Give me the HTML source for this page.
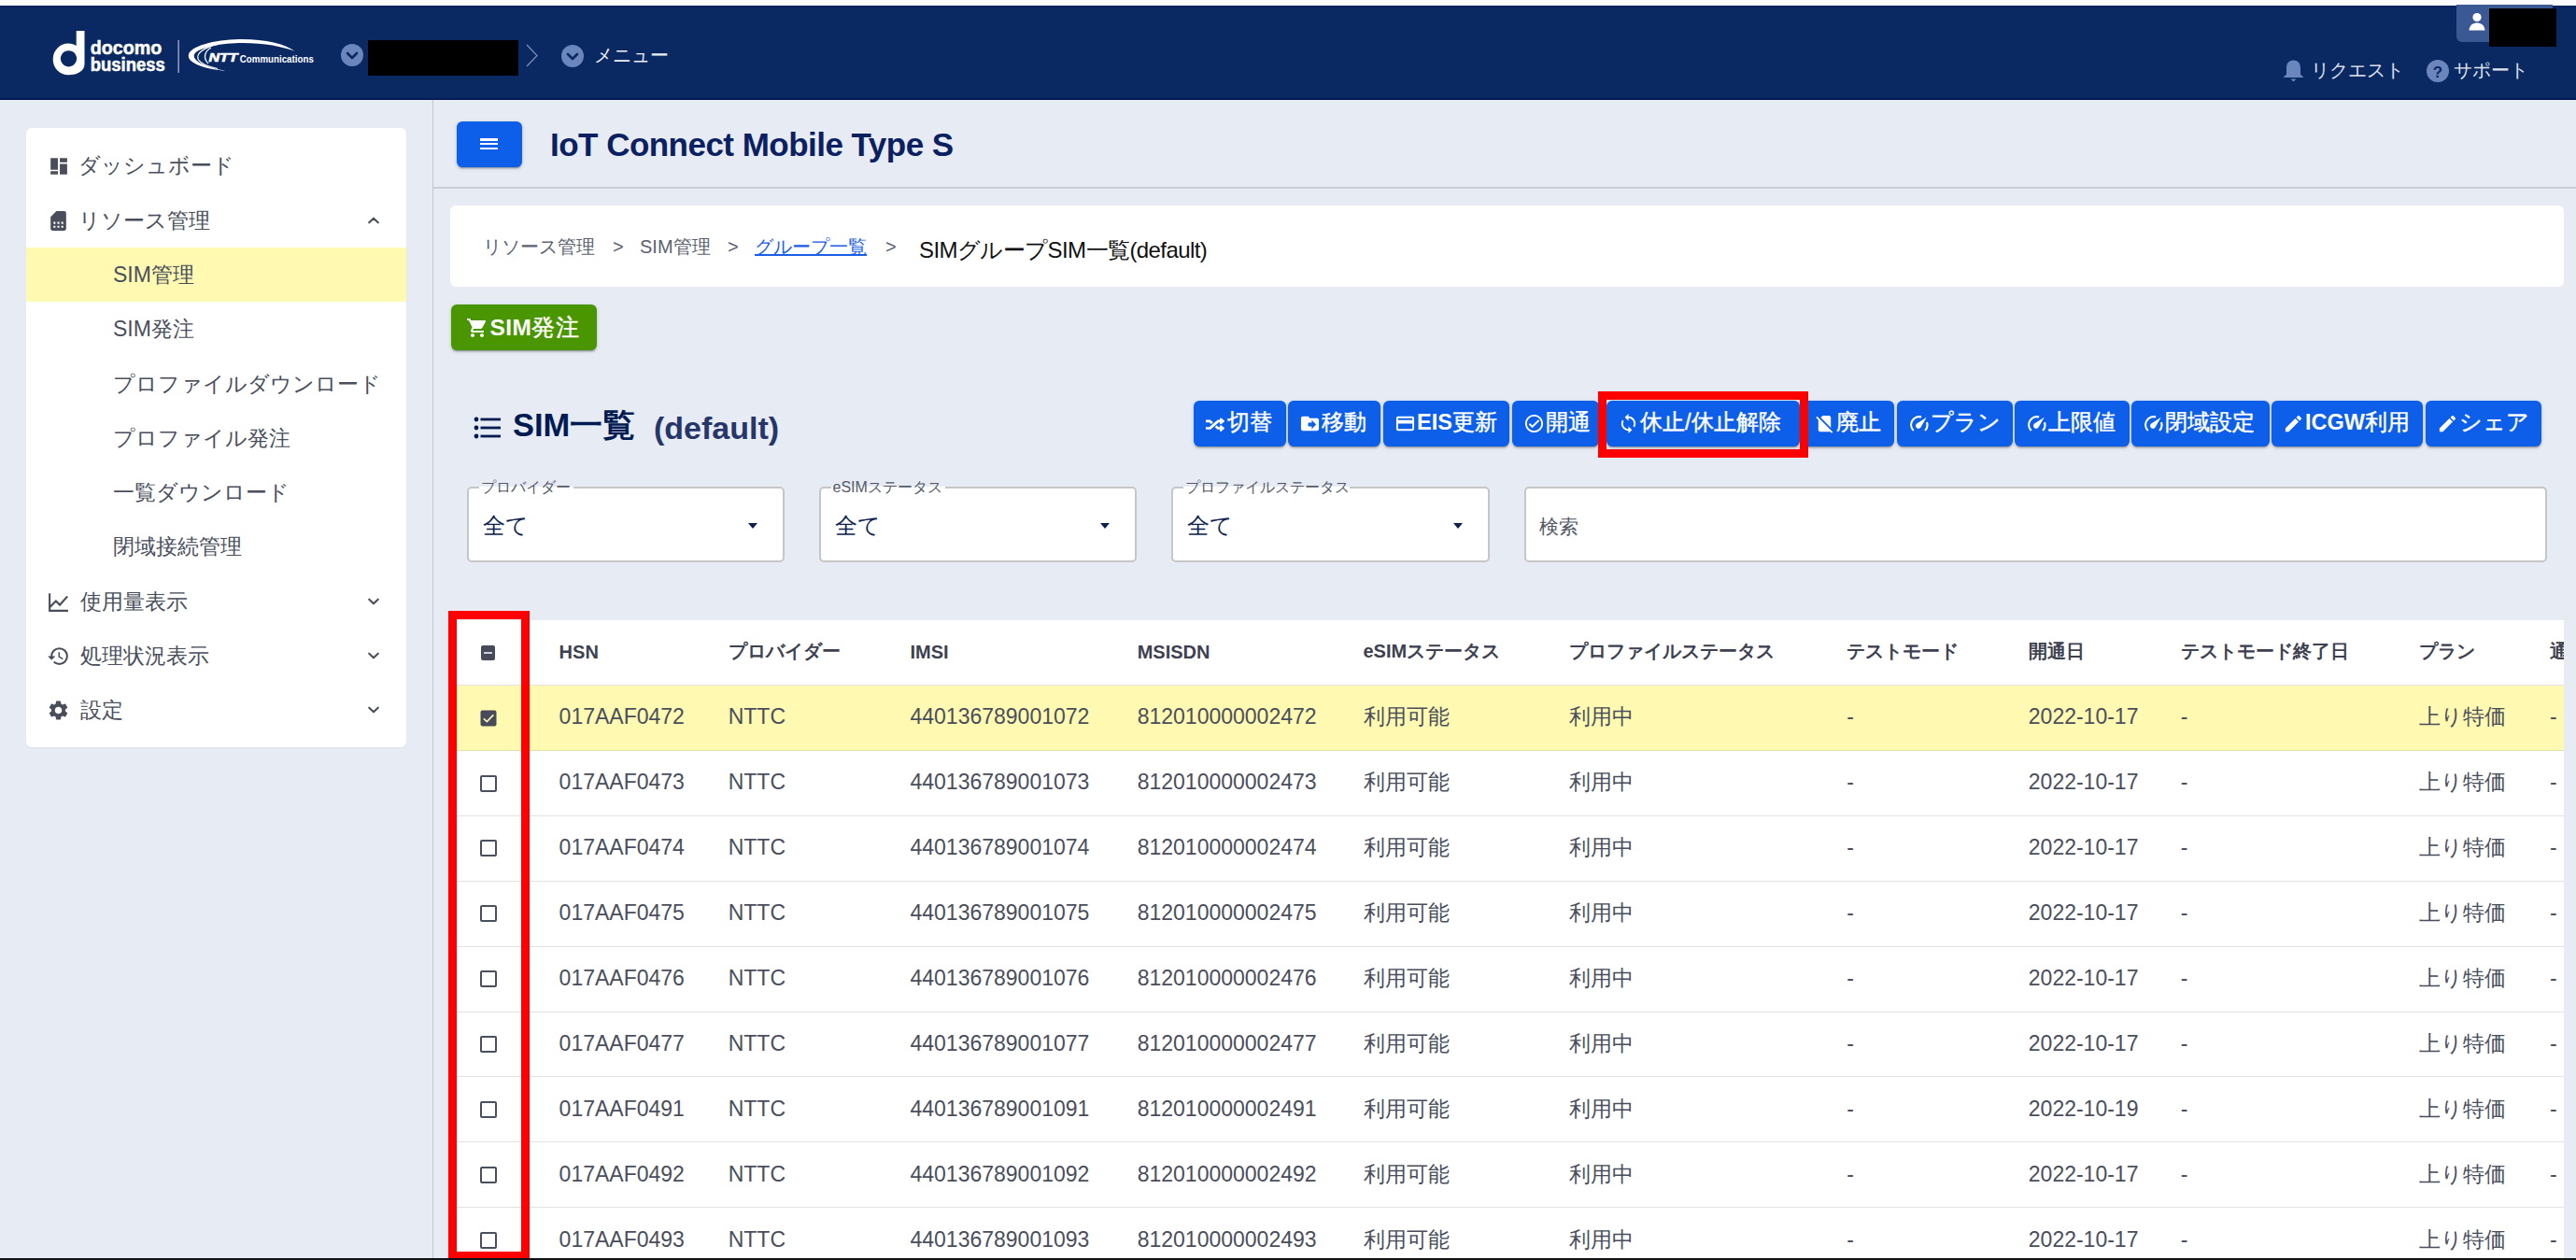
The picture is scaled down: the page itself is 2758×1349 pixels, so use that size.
<!DOCTYPE html>
<html lang="ja">
<head>
<meta charset="utf-8">
<style>
*{box-sizing:border-box;margin:0;padding:0}
html,body{width:2758px;height:1349px;overflow:hidden}
body{position:relative;background:#e7ebf4;font-family:"Liberation Sans",sans-serif;color:#4a4e5c}
.a{position:absolute;white-space:nowrap}
#topstrip{left:0;top:0;width:2758px;height:5.5px;background:#fbfbfd}
#header{left:0;top:5.5px;width:2758px;height:101.5px;background:#0a2862;box-shadow:inset 0 -1.6px 0 #001452, inset 0 1.5px 0 #001e5c}
#vdiv{left:463px;top:107px;width:1px;height:1240px;background:#c3c7d1}
#hdiv{left:464px;top:200px;width:2294px;height:2px;background:#c9ced8}
#sidebar{left:28px;top:137px;width:407px;height:663px;background:#fff;border-radius:6px;box-shadow:0 1px 2px rgba(0,0,0,.04)}
#bccard{left:482px;top:220px;width:2263px;height:87px;background:#fff;border-radius:6px}
#bottombar{left:0;top:1347px;width:2758px;height:2px;background:#111}
.redbox{position:absolute;border:9px solid #ff0000}
.t{position:absolute;white-space:nowrap;line-height:1}
.side{font-size:23px;color:#4b4f5d}
.yel{background:#fff9b1}
.tr.yel{border-bottom-color:#e6e1a8}
.btn{position:absolute;top:429px;height:49px;background:#0d5ee8;border-radius:6px;box-shadow:0 3px 1px -2px rgba(0,0,0,.2),0 2px 2px 0 rgba(0,0,0,.14),0 1px 5px 0 rgba(0,0,0,.12);color:#fff}
.btn .t{font-size:23.5px;color:#fff;top:12px;-webkit-text-stroke:0.45px #fff}
.btn svg{position:absolute}
.fld{position:absolute;top:521px;height:81px;background:#fff;border:2px solid #c6c6c6;border-radius:5px}
.fld .lbl{position:absolute;top:-9px;font-size:16px;line-height:16px;color:#555a68;white-space:nowrap}
.fld .gap{position:absolute;top:-2px;height:2px;background:#fff}
.fld .val{position:absolute;left:15px;top:28px;font-size:24px;line-height:24px;color:#0e1f4f;white-space:nowrap}
.fld .arr{position:absolute;top:37px;width:0;height:0;border-left:5.5px solid transparent;border-right:5.5px solid transparent;border-top:6.5px solid #0e1f4f}
#table{left:483px;top:663.5px;width:2262px;height:684px;background:#fff;overflow:hidden}
.tr{position:absolute;left:0;width:2262px;height:70px;border-bottom:1.5px solid #e2e2e2}
.th{font-size:20px;font-weight:bold;color:#3d4150}
.td{font-size:23px;color:#4a4e5c}
</style>
</head>
<body>
<div id="topstrip" class="a"></div>
<div id="header" class="a"></div>
<svg class="a" style="left:50px;top:28px" width="300" height="60" viewBox="50 28 300 60">
<path fill="#fff" fill-rule="evenodd" d="M81.7 33h8.8v36c0 6.5-7.5 11.3-17 11.3c-9.5 0-16.8-7-16.8-16.8c0-9.6 7.4-17 16.6-17c3.2 0 6.2 .9 8.4 2.4zM73.5 54.2a8.6 8.6 0 1 0 0.01 0z"/>
<text x="96.8" y="58.2" fill="#fff" font-family="Liberation Sans" font-weight="bold" font-size="20" stroke="#fff" stroke-width="0.5" textLength="76.5" lengthAdjust="spacingAndGlyphs">docomo</text>
<text x="96.8" y="75.8" fill="#fff" font-family="Liberation Sans" font-weight="bold" font-size="20" stroke="#fff" stroke-width="0.5" textLength="80" lengthAdjust="spacingAndGlyphs">business</text>
<rect x="190.5" y="43" width="1.3" height="35" fill="#a9b4cc"/>
<path fill="#fff" d="M241.5 75.8 C 222 74.5 201.3 68.5 201.8 59.5 C 202.5 49 232 42 259 42 C 285 42 305 47 315.5 54.8 C 303 50 283 46 260 46 C 236 46 209.5 51.5 207.8 59 C 206.5 66 222 72.5 241.5 75.8 Z"/>
<g fill="none" stroke="#fff">
<path d="M233 47.3 C 216 51.5 209.5 58 212.5 64 C 215 68.5 224 71.5 233 73.5" stroke-width="1.2"/>
<path d="M226 51 C 219 55 217 62 223 68" stroke-width="1.3"/>
</g>
<text x="223.5" y="66.3" fill="#fff" font-family="Liberation Sans" font-weight="bold" font-style="italic" font-size="12" stroke="#fff" stroke-width="0.6" textLength="31" lengthAdjust="spacingAndGlyphs">NTT</text>
<text x="256.8" y="66.6" fill="#fff" font-family="Liberation Sans" font-weight="bold" font-size="11.4" textLength="79" lengthAdjust="spacingAndGlyphs">Communications</text>
</svg>
<svg class="a" style="left:364px;top:45.5px" width="26" height="26" viewBox="0 0 26 26"><circle cx="13" cy="13" r="12" fill="#6a86bd"/><path d="M8 11 L13 16 L18 11" fill="none" stroke="#0a2862" stroke-width="2.6" stroke-linecap="round" stroke-linejoin="round"/></svg>
<div class="a" style="left:394px;top:43px;width:161px;height:38px;background:#000"></div>
<svg class="a" style="left:560px;top:46px" width="20" height="28" viewBox="0 0 20 28"><path d="M4 2 L15 13.5 L4 25" fill="none" stroke="#7c8db5" stroke-width="1.3"/></svg>
<svg class="a" style="left:599.5px;top:46.5px" width="26" height="26" viewBox="0 0 26 26"><circle cx="13" cy="13" r="12" fill="#6a86bd"/><path d="M8 11 L13 16 L18 11" fill="none" stroke="#0a2862" stroke-width="2.6" stroke-linecap="round" stroke-linejoin="round"/></svg>
<div class="t " style="left:636px;top:49px;font-size:20px;color:#eceef4">メニュー</div>
<div class="a" style="left:2630px;top:5px;width:103px;height:40px;background:#3a5894;border-radius:0 0 6px 6px"></div>
<svg class="a" style="left:2641px;top:13px" width="22" height="21" viewBox="0 0 22 21"><circle cx="11" cy="5.5" r="4.6" fill="#fff"/><path d="M2.5 19.5 C3 13.5 7 11.5 11 11.5 C15 11.5 19 13.5 19.5 19.5 Z" fill="#fff"/></svg>
<div class="a" style="left:2665px;top:9px;width:72px;height:41px;background:#000"></div>
<svg class="a" style="left:2443px;top:63px" width="25" height="26" viewBox="0 0 25 26"><path d="M12.5 1.5 C7.5 1.5 5 5 5 10 L5 16.5 L1.5 20 L23.5 20 L20 16.5 L20 10 C20 5 17.5 1.5 12.5 1.5Z" fill="#6a86bd"/><path d="M9.5 21.5 L15.5 21.5 L12.5 24.5Z" fill="#6a86bd"/></svg>
<div class="t " style="left:2474px;top:65px;font-size:20px;color:#dfe2ea">リクエスト</div>
<svg class="a" style="left:2597px;top:63px" width="26" height="26" viewBox="0 0 26 26"><circle cx="13" cy="13" r="12" fill="#6a86bd"/><text x="13" y="19.5" text-anchor="middle" font-family="Liberation Sans" font-weight="bold" font-size="17" fill="#0a2862">?</text></svg>
<div class="t " style="left:2627px;top:65px;font-size:20px;color:#dfe2ea">サポート</div>
<div id="vdiv" class="a"></div>
<div id="hdiv" class="a"></div>
<div id="sidebar" class="a"></div>
<div class="a yel" style="left:28px;top:265px;width:407px;height:58px"></div>
<div class="t side" style="left:83.5px;top:166.4px;">ダッシュボード</div>
<svg class="a" style="left:50px;top:165.5px" width="25" height="25" viewBox="0 0 24 24" fill="#4a4d5a"><path d="M4 3h7.5v12H4zM4 16.5h7.5v3.5H4zM13.5 3H21v4.5h-7.5zM13.5 9H21v11h-7.5z"/></svg>
<div class="t side" style="left:83.5px;top:224.5px;">リソース管理</div>
<svg class="a" style="left:50px;top:223.60000000000002px" width="25" height="25" viewBox="0 0 24 24" fill="#4a4d5a"><path d="M18 2h-8L4 8v12c0 1.1.9 2 2 2h12c1.1 0 2-.9 2-2V4c0-1.1-.9-2-2-2zM9 19H7v-2h2v2zm8 0h-2v-2h2v2zm-4 0h-2v-2h2v2zm0-4h-2v-2h2v2zm-4 0H7v-2h2v2zm8 0h-2v-2h2v2z"/></svg>
<svg class="a" style="left:392px;top:228.3px" width="16" height="16" viewBox="0 0 16 16"><path d="M3.2 10.3 L8 5.7 L12.8 10.3" fill="none" stroke="#4a4d5a" stroke-width="2.1" stroke-linecap="round" stroke-linejoin="round"/></svg>
<div class="t side" style="left:121px;top:283.2px;">SIM管理</div>
<div class="t side" style="left:121px;top:341.2px;">SIM発注</div>
<div class="t side" style="left:121px;top:399.5px;">プロファイルダウンロード</div>
<div class="t side" style="left:121px;top:457.7px;">プロファイル発注</div>
<div class="t side" style="left:121px;top:516.2px;">一覧ダウンロード</div>
<div class="t side" style="left:121px;top:574.2px;">閉域接続管理</div>
<div class="t side" style="left:86px;top:632.5px;">使用量表示</div>
<svg class="a" style="left:50px;top:631.5999999999999px" width="25" height="25" viewBox="0 0 24 24" fill="#4a4d5a"><path d="M3.5 18.49l6-6.01 4 4L22 6.92l-1.41-1.41-7.09 7.97-4-4L2 16.99z"/><path d="M2 3h2v17h18v2H2z"/></svg>
<svg class="a" style="left:392px;top:635.5999999999999px" width="16" height="16" viewBox="0 0 16 16"><path d="M3.2 5.7 L8 10.3 L12.8 5.7" fill="none" stroke="#4a4d5a" stroke-width="2.1" stroke-linecap="round" stroke-linejoin="round"/></svg>
<div class="t side" style="left:86px;top:690.7px;">処理状況表示</div>
<svg class="a" style="left:50px;top:689.8px" width="25" height="25" viewBox="0 0 24 24" fill="#4a4d5a"><path d="M13 3a9 9 0 0 0-9 9H1l3.89 3.89.07.14L9 12H6c0-3.87 3.13-7 7-7s7 3.13 7 7-3.13 7-7 7c-1.93 0-3.68-.79-4.94-2.06l-1.42 1.42A8.954 8.954 0 0 0 13 21a9 9 0 0 0 0-18zm-1 5v5l4.28 2.54.72-1.21-3.5-2.08V8H12z"/></svg>
<svg class="a" style="left:392px;top:693.8px" width="16" height="16" viewBox="0 0 16 16"><path d="M3.2 5.7 L8 10.3 L12.8 5.7" fill="none" stroke="#4a4d5a" stroke-width="2.1" stroke-linecap="round" stroke-linejoin="round"/></svg>
<div class="t side" style="left:86px;top:749.2px;">設定</div>
<svg class="a" style="left:50px;top:748.3px" width="25" height="25" viewBox="0 0 24 24" fill="#4a4d5a"><path d="M19.14 12.94c.04-.3.06-.61.06-.94 0-.32-.02-.64-.07-.94l2.03-1.58a.49.49 0 0 0 .12-.61l-1.92-3.32a.488.488 0 0 0-.59-.22l-2.39.96c-.5-.38-1.03-.7-1.62-.94l-.36-2.54a.484.484 0 0 0-.48-.41h-3.84c-.24 0-.43.17-.47.41l-.36 2.54c-.59.24-1.13.57-1.62.94l-2.39-.96c-.22-.08-.47 0-.59.22L2.74 8.87c-.12.21-.08.47.12.61l2.03 1.58c-.05.3-.09.63-.09.94s.02.64.07.94l-2.03 1.58a.49.49 0 0 0-.12.61l1.92 3.32c.12.22.37.29.59.22l2.39-.96c.5.38 1.03.7 1.62.94l.36 2.54c.05.24.24.41.48.41h3.84c.24 0 .44-.17.47-.41l.36-2.54c.59-.24 1.13-.56 1.62-.94l2.39.96c.22.08.47 0 .59-.22l1.92-3.32c.12-.22.07-.47-.12-.61l-2.01-1.58zM12 15.6c-1.98 0-3.6-1.62-3.6-3.6s1.62-3.6 3.6-3.6 3.6 1.62 3.6 3.6-1.62 3.6-3.6 3.6z"/></svg>
<svg class="a" style="left:392px;top:752.3px" width="16" height="16" viewBox="0 0 16 16"><path d="M3.2 5.7 L8 10.3 L12.8 5.7" fill="none" stroke="#4a4d5a" stroke-width="2.1" stroke-linecap="round" stroke-linejoin="round"/></svg>
<div class="a" style="left:489px;top:130px;width:70px;height:48.5px;background:#0d5ee8;border-radius:6px;box-shadow:0 3px 1px -2px rgba(0,0,0,.2),0 2px 2px 0 rgba(0,0,0,.14),0 1px 5px 0 rgba(0,0,0,.12)"></div>
<div class="a" style="left:514px;top:148.3px;width:18.5px;height:2.4px;background:#fff"></div>
<div class="a" style="left:514px;top:153.1px;width:18.5px;height:2.4px;background:#fff"></div>
<div class="a" style="left:514px;top:157.9px;width:18.5px;height:2.4px;background:#fff"></div>
<div class="t " style="left:589px;top:137px;font-size:35px;font-weight:bold;color:#0a2060;letter-spacing:-0.52px">IoT Connect Mobile Type S</div>
<div id="bccard" class="a"></div>
<div class="t " style="left:517px;top:253.5px;font-size:20px;color:#5d6270">リソース管理</div>
<div class="t " style="left:656px;top:253.5px;font-size:20px;color:#5d6270">&gt;</div>
<div class="t " style="left:685px;top:253.5px;font-size:20px;color:#5d6270">SIM管理</div>
<div class="t " style="left:779px;top:253.5px;font-size:20px;color:#5d6270">&gt;</div>
<div class="t " style="left:808px;top:253.5px;font-size:20px;color:#1a5ee8;text-decoration:underline">グループ一覧</div>
<div class="t " style="left:948px;top:253.5px;font-size:20px;color:#5d6270">&gt;</div>
<div class="t " style="left:984px;top:256px;font-size:24px;color:#111;letter-spacing:-0.58px">SIMグループSIM一覧(default)</div>
<div class="a" style="left:483px;top:326px;width:156px;height:49px;background:#4a9600;border-radius:6px;box-shadow:0 3px 1px -2px rgba(0,0,0,.2),0 2px 2px 0 rgba(0,0,0,.14),0 1px 5px 0 rgba(0,0,0,.12)"></div>
<svg class="a" style="left:499px;top:339px" width="24" height="24" viewBox="0 0 24 24" fill="#fff"><path d="M7 18c-1.1 0-1.99.9-1.99 2S5.9 22 7 22s2-.9 2-2-.9-2-2-2zM1 2v2h2l3.6 7.59-1.35 2.45c-.16.28-.25.61-.25.96 0 1.1.9 2 2 2h12v-2H7.42c-.14 0-.25-.11-.25-.25l.03-.12.9-1.63h7.45c.75 0 1.41-.41 1.75-1.03l3.58-6.49A1.003 1.003 0 0 0 20 4H5.21l-.94-2H1zm16 16c-1.1 0-1.99.9-1.99 2s.89 2 1.99 2 2-.9 2-2-.9-2-2-2z"/></svg>
<div class="t " style="left:524.5px;top:338.5px;font-size:24.5px;color:#fff;letter-spacing:0.4px;-webkit-text-stroke:0.45px #fff"><b style="-webkit-text-stroke:0">SIM</b>発注</div>
<svg class="a" style="left:506px;top:445px" width="32" height="26" viewBox="0 0 32 26" fill="#001a52"><circle cx="4" cy="4" r="2.4"/><circle cx="4" cy="13" r="2.4"/><circle cx="4" cy="22" r="2.4"/><rect x="8.5" y="2.6" width="21.5" height="2.8"/><rect x="8.5" y="11.6" width="21.5" height="2.8"/><rect x="8.5" y="20.6" width="21.5" height="2.8"/></svg>
<div class="t " style="left:549px;top:438px;font-size:34.5px;font-weight:bold;color:#001a52;letter-spacing:0px">SIM一覧</div>
<div class="t " style="left:700px;top:441px;font-size:34px;font-weight:bold;color:#263668">(default)</div>
<div class="btn" style="left:1278px;width:98.5px"><svg style="left:12px;top:13px" width="23" height="23" viewBox="0 0 24 24" fill="#fff"><path transform="translate(1,4.7) scale(0.041,0.0335)" d="M504.971 359.029c9.373 9.373 9.373 24.569 0 33.941l-80 79.984c-15.01 15.01-40.971 4.49-40.971-16.971V416h-58.785a12.004 12.004 0 0 1-8.773-3.812l-70.556-75.596 53.333-57.143L352 336h32v-39.981c0-21.438 25.943-31.998 40.971-16.971l80 79.981zM12 176h84l52.781 56.551 53.333-57.143-70.556-75.596A11.999 11.999 0 0 0 122.785 96H12c-6.627 0-12 5.373-12 12v56c0 6.627 5.373 12 12 12zm372 0v39.984c0 21.46 25.961 31.98 40.971 16.971l80-79.984c9.373-9.373 9.373-24.569 0-33.941l-80-79.981C409.943 24.021 384 34.582 384 56.019V96h-58.785a12.004 12.004 0 0 0-8.773 3.812L96 336H12c-6.627 0-12 5.373-12 12v56c0 6.627 5.373 12 12 12h110.785c3.326 0 6.503-1.381 8.773-3.812L352 176h32z"/></svg><div class="t" style="left:36px">切替</div></div>
<div class="btn" style="left:1379px;width:99px"><svg style="left:12px;top:13px" width="23" height="23" viewBox="0 0 24 24" fill="#fff"><path d="M20 6h-8l-2-2H4c-1.1 0-1.99.9-1.99 2L2 18c0 1.1.9 2 2 2h16c1.1 0 2-.9 2-2V8c0-1.1-.9-2-2-2zm-6 12v-3h-4v-4h4V8l5 5-5 5z"/></svg><div class="t" style="left:36px">移動</div></div>
<div class="btn" style="left:1481px;width:135px"><svg style="left:12px;top:13px" width="23" height="23" viewBox="0 0 24 24" fill="#fff"><path d="M20 4H4c-1.11 0-1.99.89-1.99 2L2 18c0 1.11.89 2 2 2h16c1.11 0 2-.89 2-2V6c0-1.11-.89-2-2-2zm0 14H4v-6h16v6zm0-10H4V6h16v2z"/></svg><div class="t" style="left:36px"><b style="-webkit-text-stroke:0">EIS</b>更新</div></div>
<div class="btn" style="left:1619px;width:93px"><svg style="left:12px;top:13px" width="23" height="23" viewBox="0 0 24 24" fill="#fff"><path d="M12 2C6.48 2 2 6.48 2 12s4.48 10 10 10 10-4.48 10-10S17.52 2 12 2zm0 18c-4.41 0-8-3.59-8-8s3.59-8 8-8 8 3.59 8 8-3.59 8-8 8zm4.59-12.42L10 14.17l-2.59-2.58L6 13l4 4 8-8z"/></svg><div class="t" style="left:36px">開通</div></div>
<div class="btn" style="left:1720px;width:207px"><svg style="left:12px;top:13px" width="23" height="23" viewBox="0 0 24 24" fill="#fff"><path d="M12 4V1L8 5l4 4V6c3.31 0 6 2.69 6 6 0 1.01-.25 1.97-.7 2.8l1.46 1.46A7.93 7.93 0 0 0 20 12c0-4.42-3.58-8-8-8zm0 14c-3.31 0-6-2.69-6-6 0-1.01.25-1.97.7-2.8L5.24 7.74A7.93 7.93 0 0 0 4 12c0 4.42 3.58 8 8 8v3l4-4-4-4v3z"/></svg><div class="t" style="left:36px">休止/休止解除</div></div>
<div class="btn" style="left:1930px;width:98px"><svg style="left:12px;top:13px" width="23" height="23" viewBox="0 0 24 24" fill="#fff"><path d="M18.99 5c0-1.1-.89-2-1.99-2h-7L7.66 5.34 19 16.68 18.99 5zM3.65 3.88L2.38 5.15 5 7.77V19c0 1.1.9 2 2 2h10.01c.35 0 .67-.1.96-.26l1.88 1.88 1.27-1.27L3.65 3.88z"/></svg><div class="t" style="left:36px">廃止</div></div>
<div class="btn" style="left:2031px;width:124px"><svg style="left:12px;top:13px" width="23" height="23" viewBox="0 0 24 24" fill="#fff"><g transform="translate(-1.14,0.1) scale(1.12)"><path d="M6.4 17.7 A 8.1 8.1 0 0 1 14.2 4.1 M 19.6 9.3 A 8.1 8.1 0 0 1 17.8 17.7" fill="none" stroke="#fff" stroke-width="2"/><path d="M19.4 4.3 L 14 13.6 A 2.8 2.8 0 1 1 10.4 10.2 Z"/></g></svg><div class="t" style="left:36px">プラン</div></div>
<div class="btn" style="left:2157px;width:123px"><svg style="left:12px;top:13px" width="23" height="23" viewBox="0 0 24 24" fill="#fff"><g transform="translate(-1.14,0.1) scale(1.12)"><path d="M6.4 17.7 A 8.1 8.1 0 0 1 14.2 4.1 M 19.6 9.3 A 8.1 8.1 0 0 1 17.8 17.7" fill="none" stroke="#fff" stroke-width="2"/><path d="M19.4 4.3 L 14 13.6 A 2.8 2.8 0 1 1 10.4 10.2 Z"/></g></svg><div class="t" style="left:36px">上限値</div></div>
<div class="btn" style="left:2282px;width:148px"><svg style="left:12px;top:13px" width="23" height="23" viewBox="0 0 24 24" fill="#fff"><g transform="translate(-1.14,0.1) scale(1.12)"><path d="M6.4 17.7 A 8.1 8.1 0 0 1 14.2 4.1 M 19.6 9.3 A 8.1 8.1 0 0 1 17.8 17.7" fill="none" stroke="#fff" stroke-width="2"/><path d="M19.4 4.3 L 14 13.6 A 2.8 2.8 0 1 1 10.4 10.2 Z"/></g></svg><div class="t" style="left:36px">閉域設定</div></div>
<div class="btn" style="left:2432px;width:162px"><svg style="left:12px;top:13px" width="23" height="23" viewBox="0 0 24 24" fill="#fff"><path d="M3 17.25V21h3.75L17.81 9.94l-3.75-3.75L3 17.25zM20.71 7.04a.996.996 0 0 0 0-1.41l-2.34-2.34a.996.996 0 0 0-1.41 0l-1.83 1.83 3.75 3.75 1.83-1.83z"/></svg><div class="t" style="left:36px"><b style="-webkit-text-stroke:0">ICGW</b>利用</div></div>
<div class="btn" style="left:2597px;width:124px"><svg style="left:12px;top:13px" width="23" height="23" viewBox="0 0 24 24" fill="#fff"><path d="M3 17.25V21h3.75L17.81 9.94l-3.75-3.75L3 17.25zM20.71 7.04a.996.996 0 0 0 0-1.41l-2.34-2.34a.996.996 0 0 0-1.41 0l-1.83 1.83 3.75 3.75 1.83-1.83z"/></svg><div class="t" style="left:36px">シェア</div></div>
<div class="fld" style="left:500px;width:340px"><div class="gap" style="left:11.4px;width:101px"></div><div class="lbl" style="left:12.5px">プロバイダー</div><div class="val">全て</div><div class="arr" style="left:299px"></div></div>
<div class="fld" style="left:877px;width:340px"><div class="gap" style="left:11.4px;width:122px"></div><div class="lbl" style="left:12.5px">eSIMステータス</div><div class="val">全て</div><div class="arr" style="left:299px"></div></div>
<div class="fld" style="left:1254px;width:341px"><div class="gap" style="left:11.4px;width:178px"></div><div class="lbl" style="left:12.5px">プロファイルステータス</div><div class="val">全て</div><div class="arr" style="left:300px"></div></div>
<div class="fld" style="left:1632px;width:1095px"><div class="val" style="font-size:21px;color:#555a66;top:28.5px;left:14px">検索</div></div>
<div id="table" class="a"><div class="tr" style="top:0;height:70.2px"></div><div class="t th" style="left:115.6px;top:24.5px;">HSN</div><div class="t th" style="left:296.7px;top:23px;">プロバイダー</div><div class="t th" style="left:491.5px;top:24.5px;">IMSI</div><div class="t th" style="left:734.7px;top:24.5px;">MSISDN</div><div class="t th" style="left:976.5px;top:23px;">eSIMステータス</div><div class="t th" style="left:1197.3px;top:23px;">プロファイルステータス</div><div class="t th" style="left:1494.3px;top:23px;">テストモード</div><div class="t th" style="left:1688.8px;top:23px;">開通日</div><div class="t th" style="left:1851.8px;top:23px;">テストモード終了日</div><div class="t th" style="left:2107px;top:23px;">プラン</div><div class="t th" style="left:2247px;top:23px;">通</div><div class="a" style="left:31.5px;top:27.5px;width:15.5px;height:15.5px;background:#474b59;border-radius:2px"><div class="a" style="left:3px;top:6.6px;width:9.5px;height:2.2px;background:#cfd1d8"></div></div><div class="tr yel" style="top:70.2px"></div><div class="t td" style="left:115.6px;top:92.5px;">017AAF0472</div><div class="t td" style="left:296.7px;top:92.5px;">NTTC</div><div class="t td" style="left:491.5px;top:92.5px;">440136789001072</div><div class="t td" style="left:734.7px;top:92.5px;">812010000002472</div><div class="t td" style="left:976.5px;top:92.5px;">利用可能</div><div class="t td" style="left:1197.3px;top:92.5px;">利用中</div><div class="t td" style="left:1494.3px;top:92.5px;">-</div><div class="t td" style="left:1688.8px;top:92.5px;">2022-10-17</div><div class="t td" style="left:1851.8px;top:92.5px;">-</div><div class="t td" style="left:2107px;top:92.5px;">上り特価</div><div class="t td" style="left:2247px;top:92.5px;">-</div><svg class="a" style="left:30.5px;top:96.0px" width="18" height="18" viewBox="0 0 18 18"><rect x="0.5" y="0.5" width="17" height="17" rx="2" fill="#474b59"/><path d="M3.8 9.4 L7.3 12.6 L14.3 5.4" fill="none" stroke="#fbf6c0" stroke-width="1.7"/></svg><div class="tr" style="top:140.2px"></div><div class="t td" style="left:115.6px;top:162.5px;">017AAF0473</div><div class="t td" style="left:296.7px;top:162.5px;">NTTC</div><div class="t td" style="left:491.5px;top:162.5px;">440136789001073</div><div class="t td" style="left:734.7px;top:162.5px;">812010000002473</div><div class="t td" style="left:976.5px;top:162.5px;">利用可能</div><div class="t td" style="left:1197.3px;top:162.5px;">利用中</div><div class="t td" style="left:1494.3px;top:162.5px;">-</div><div class="t td" style="left:1688.8px;top:162.5px;">2022-10-17</div><div class="t td" style="left:1851.8px;top:162.5px;">-</div><div class="t td" style="left:2107px;top:162.5px;">上り特価</div><div class="t td" style="left:2247px;top:162.5px;">-</div><div class="a" style="left:30.5px;top:166.0px;width:18px;height:18px;border:2.2px solid #4a4f5e;border-radius:2px"></div><div class="tr" style="top:210.1px"></div><div class="t td" style="left:115.6px;top:232.4px;">017AAF0474</div><div class="t td" style="left:296.7px;top:232.4px;">NTTC</div><div class="t td" style="left:491.5px;top:232.4px;">440136789001074</div><div class="t td" style="left:734.7px;top:232.4px;">812010000002474</div><div class="t td" style="left:976.5px;top:232.4px;">利用可能</div><div class="t td" style="left:1197.3px;top:232.4px;">利用中</div><div class="t td" style="left:1494.3px;top:232.4px;">-</div><div class="t td" style="left:1688.8px;top:232.4px;">2022-10-17</div><div class="t td" style="left:1851.8px;top:232.4px;">-</div><div class="t td" style="left:2107px;top:232.4px;">上り特価</div><div class="t td" style="left:2247px;top:232.4px;">-</div><div class="a" style="left:30.5px;top:235.9px;width:18px;height:18px;border:2.2px solid #4a4f5e;border-radius:2px"></div><div class="tr" style="top:280.1px"></div><div class="t td" style="left:115.6px;top:302.4px;">017AAF0475</div><div class="t td" style="left:296.7px;top:302.4px;">NTTC</div><div class="t td" style="left:491.5px;top:302.4px;">440136789001075</div><div class="t td" style="left:734.7px;top:302.4px;">812010000002475</div><div class="t td" style="left:976.5px;top:302.4px;">利用可能</div><div class="t td" style="left:1197.3px;top:302.4px;">利用中</div><div class="t td" style="left:1494.3px;top:302.4px;">-</div><div class="t td" style="left:1688.8px;top:302.4px;">2022-10-17</div><div class="t td" style="left:1851.8px;top:302.4px;">-</div><div class="t td" style="left:2107px;top:302.4px;">上り特価</div><div class="t td" style="left:2247px;top:302.4px;">-</div><div class="a" style="left:30.5px;top:305.9px;width:18px;height:18px;border:2.2px solid #4a4f5e;border-radius:2px"></div><div class="tr" style="top:350.0px"></div><div class="t td" style="left:115.6px;top:372.3px;">017AAF0476</div><div class="t td" style="left:296.7px;top:372.3px;">NTTC</div><div class="t td" style="left:491.5px;top:372.3px;">440136789001076</div><div class="t td" style="left:734.7px;top:372.3px;">812010000002476</div><div class="t td" style="left:976.5px;top:372.3px;">利用可能</div><div class="t td" style="left:1197.3px;top:372.3px;">利用中</div><div class="t td" style="left:1494.3px;top:372.3px;">-</div><div class="t td" style="left:1688.8px;top:372.3px;">2022-10-17</div><div class="t td" style="left:1851.8px;top:372.3px;">-</div><div class="t td" style="left:2107px;top:372.3px;">上り特価</div><div class="t td" style="left:2247px;top:372.3px;">-</div><div class="a" style="left:30.5px;top:375.8px;width:18px;height:18px;border:2.2px solid #4a4f5e;border-radius:2px"></div><div class="tr" style="top:419.9px"></div><div class="t td" style="left:115.6px;top:442.2px;">017AAF0477</div><div class="t td" style="left:296.7px;top:442.2px;">NTTC</div><div class="t td" style="left:491.5px;top:442.2px;">440136789001077</div><div class="t td" style="left:734.7px;top:442.2px;">812010000002477</div><div class="t td" style="left:976.5px;top:442.2px;">利用可能</div><div class="t td" style="left:1197.3px;top:442.2px;">利用中</div><div class="t td" style="left:1494.3px;top:442.2px;">-</div><div class="t td" style="left:1688.8px;top:442.2px;">2022-10-17</div><div class="t td" style="left:1851.8px;top:442.2px;">-</div><div class="t td" style="left:2107px;top:442.2px;">上り特価</div><div class="t td" style="left:2247px;top:442.2px;">-</div><div class="a" style="left:30.5px;top:445.8px;width:18px;height:18px;border:2.2px solid #4a4f5e;border-radius:2px"></div><div class="tr" style="top:489.9px"></div><div class="t td" style="left:115.6px;top:512.2px;">017AAF0491</div><div class="t td" style="left:296.7px;top:512.2px;">NTTC</div><div class="t td" style="left:491.5px;top:512.2px;">440136789001091</div><div class="t td" style="left:734.7px;top:512.2px;">812010000002491</div><div class="t td" style="left:976.5px;top:512.2px;">利用可能</div><div class="t td" style="left:1197.3px;top:512.2px;">利用中</div><div class="t td" style="left:1494.3px;top:512.2px;">-</div><div class="t td" style="left:1688.8px;top:512.2px;">2022-10-19</div><div class="t td" style="left:1851.8px;top:512.2px;">-</div><div class="t td" style="left:2107px;top:512.2px;">上り特価</div><div class="t td" style="left:2247px;top:512.2px;">-</div><div class="a" style="left:30.5px;top:515.7px;width:18px;height:18px;border:2.2px solid #4a4f5e;border-radius:2px"></div><div class="tr" style="top:559.9px"></div><div class="t td" style="left:115.6px;top:582.1px;">017AAF0492</div><div class="t td" style="left:296.7px;top:582.1px;">NTTC</div><div class="t td" style="left:491.5px;top:582.1px;">440136789001092</div><div class="t td" style="left:734.7px;top:582.1px;">812010000002492</div><div class="t td" style="left:976.5px;top:582.1px;">利用可能</div><div class="t td" style="left:1197.3px;top:582.1px;">利用中</div><div class="t td" style="left:1494.3px;top:582.1px;">-</div><div class="t td" style="left:1688.8px;top:582.1px;">2022-10-17</div><div class="t td" style="left:1851.8px;top:582.1px;">-</div><div class="t td" style="left:2107px;top:582.1px;">上り特価</div><div class="t td" style="left:2247px;top:582.1px;">-</div><div class="a" style="left:30.5px;top:585.6px;width:18px;height:18px;border:2.2px solid #4a4f5e;border-radius:2px"></div><div class="tr" style="top:629.8px"></div><div class="t td" style="left:115.6px;top:652.1px;">017AAF0493</div><div class="t td" style="left:296.7px;top:652.1px;">NTTC</div><div class="t td" style="left:491.5px;top:652.1px;">440136789001093</div><div class="t td" style="left:734.7px;top:652.1px;">812010000002493</div><div class="t td" style="left:976.5px;top:652.1px;">利用可能</div><div class="t td" style="left:1197.3px;top:652.1px;">利用中</div><div class="t td" style="left:1494.3px;top:652.1px;">-</div><div class="t td" style="left:1688.8px;top:652.1px;">2022-10-17</div><div class="t td" style="left:1851.8px;top:652.1px;">-</div><div class="t td" style="left:2107px;top:652.1px;">上り特価</div><div class="t td" style="left:2247px;top:652.1px;">-</div><div class="a" style="left:30.5px;top:655.6px;width:18px;height:18px;border:2.2px solid #4a4f5e;border-radius:2px"></div></div>
<div class="redbox" style="left:1711px;top:419px;width:225px;height:71px"></div>
<div class="redbox" style="left:480px;top:654px;width:87px;height:695px;border-bottom-width:9px"></div>
<div id="bottombar" class="a"></div>
</body>
</html>
